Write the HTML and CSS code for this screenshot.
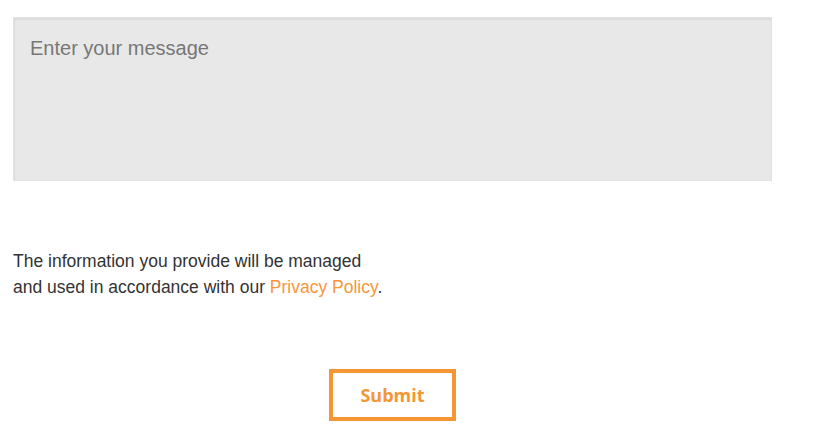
FILE: index.html
```html
<!DOCTYPE html>
<html lang="en">
<head>
<meta charset="utf-8">
<title>Contact form</title>
<link rel="stylesheet" href="styles.css">
</head>
<body>
<form class="form">
  <textarea class="message" placeholder="Enter your message"></textarea>
  <p class="notice">The information you provide will be managed<br>and used in accordance with our <a href="#" class="link">Privacy Policy</a>.</p>
  <div class="actions">
    <button type="button" class="submit">Submit</button>
  </div>
</form>
</body>
</html>
```
FILE: styles.css
```css
html, body {
  margin: 0;
  padding: 0;
  background: #fff;
}
.form {
  padding: 17px 0 0 13px;
  width: 759px;
  font-family: "Liberation Sans", Arial, sans-serif;
}
.message {
  display: block;
  box-sizing: border-box;
  width: 759px;
  height: 164px;
  margin: 0;
  padding: 18px 16px;
  border: 1px solid #e2e2e2;
  background: #e8e8e8;
  box-shadow: inset 1px 2px 2px rgba(0,0,0,0.05);
  font-family: "Liberation Sans", Arial, sans-serif;
  font-size: 20px;
  line-height: 24px;
  color: #333;
  resize: none;
  outline: none;
}
.message::placeholder {
  color: #777;
  opacity: 1;
}
.notice {
  margin: 67px 0 0 0;
  font-size: 17.5px;
  line-height: 26px;
  color: #333;
}
.link {
  color: #f7963a;
  text-decoration: none;
}
.actions {
  display: flex;
  padding-left: 316px;
  margin-top: 69px;
}
.submit {
  box-sizing: border-box;
  width: 127px;
  height: 52px;
  border: 4px solid #f59533;
  background: #fff;
  color: #f59533;
  font-family: "Open Sans", sans-serif;
  font-weight: 700;
  font-size: 18px;
  padding: 0;
  cursor: pointer;
}
```
